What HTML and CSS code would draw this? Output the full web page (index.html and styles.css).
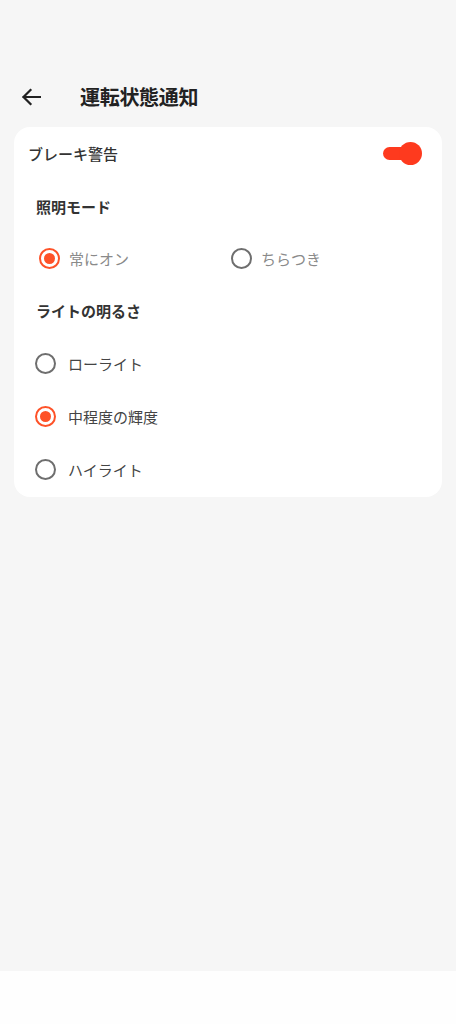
FILE: index.html
```html
<!DOCTYPE html>
<html lang="ja">
<head>
<meta charset="utf-8">
<link rel="stylesheet" href="styles.css">
</head>
<body>
<div class="screen">
  <main class="main">
    <header class="header">
      <svg class="back" width="20" height="18" viewBox="0 0 20 18" aria-hidden="true">
        <path d="M19 9H2.5M9.5 2 2.5 9l7 7" fill="none" stroke="#222" stroke-width="2.2" stroke-linecap="square"/>
      </svg>
      <h1 class="title">運転状態通知</h1>
    </header>
    <section class="card">
      <div class="row-switch">
        <span class="switch-label">ブレーキ警告</span>
        <span class="toggle"></span>
      </div>
      <div class="label">照明モード</div>
      <div class="mode-row">
        <div class="opt opt-muted"><span class="radio checked"></span><span>常にオン</span></div>
        <div class="opt opt-muted"><span class="radio"></span><span>ちらつき</span></div>
      </div>
      <div class="label label-2">ライトの明るさ</div>
      <div class="opt-row"><span class="radio"></span><span>ローライト</span></div>
      <div class="opt-row"><span class="radio checked"></span><span>中程度の輝度</span></div>
      <div class="opt-row"><span class="radio"></span><span>ハイライト</span></div>
    </section>
  </main>
  <div class="bottom"></div>
</div>
</body>
</html>
```

FILE: styles.css
```css
* { box-sizing: border-box; margin: 0; padding: 0; }
html, body { height: 100%; }
body {
  background: #f6f6f6;
  font-family: "Noto Sans CJK JP", "Noto Sans", sans-serif;
  color: #333;
}
.screen { height: 1024px; display: flex; flex-direction: column; }
.main { flex: 1; padding-top: 73px; }
.bottom { height: 53px; background: #fefefe; }

.header {
  height: 48px;
  display: flex;
  align-items: center;
  padding-left: 21px;
  padding-bottom: 2px;
  gap: 39px;
  margin-bottom: 6px;
}
.back { display: block; margin-top: 1px; }
.title { font-size: 20px; font-weight: 700; color: #222; letter-spacing: -0.3px; }

.card {
  margin: 0 14px;
  background: #fff;
  border-radius: 16px;
  display: flex;
  flex-direction: column;
}
.row-switch {
  height: 54px;
  display: flex;
  align-items: center;
  justify-content: space-between;
  padding: 0 20px 2px 14px;
}
.switch-label { font-size: 15px; font-weight: 500; color: #333; }
.toggle { position: relative; width: 39px; height: 23px; }
.toggle::before {
  content: "";
  position: absolute;
  left: 0; top: 5px;
  width: 30px; height: 13px;
  border-radius: 7px;
  background: #fe3a1e;
}
.toggle::after {
  content: "";
  position: absolute;
  right: 0; top: 0;
  width: 23px; height: 23px;
  border-radius: 50%;
  background: #fe3a1e;
}

.label {
  height: 52px;
  display: flex;
  align-items: center;
  padding-left: 22px;
  padding-bottom: 2px;
  font-size: 15px;
  font-weight: 700;
  color: #333;
}
.label-2 { height: 53px; }

.mode-row {
  height: 52px;
  display: grid;
  grid-template-columns: 192px 192px;
  align-items: center;
  padding-left: 25px;
  padding-bottom: 2px;
}
.opt { display: flex; align-items: center; gap: 9px; font-size: 15px; }
.opt-muted { color: #8a8a8a; }

.opt-row {
  height: 53px;
  display: flex;
  align-items: center;
  gap: 12px;
  padding-left: 21px;
  padding-bottom: 2px;
  font-size: 15px;
  color: #444;
}

.radio {
  width: 21px; height: 21px;
  border-radius: 50%;
  border: 2px solid #6e6e6e;
  display: flex;
  align-items: center;
  justify-content: center;
  flex-shrink: 0;
}
.radio.checked { border-color: #fe5228; }
.radio.checked::after {
  content: "";
  width: 11px; height: 11px;
  border-radius: 50%;
  background: #fe5228;
}
```
